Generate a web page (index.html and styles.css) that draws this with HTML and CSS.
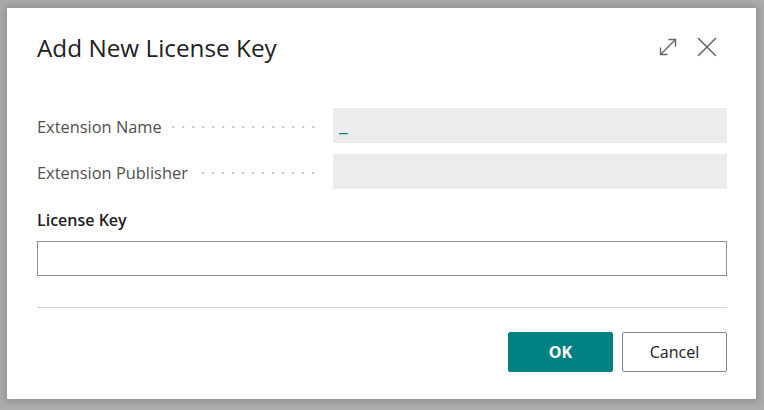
FILE: index.html
```html
<!DOCTYPE html>
<html lang="en">
<head>
<meta charset="utf-8">
<title>Add New License Key</title>
<link rel="stylesheet" href="styles.css">
</head>
<body>
<div class="backdrop">
  <div class="dialog">
    <div class="header">
      <h1 class="title">Add New License Key</h1>
      <div class="header-actions">
        <button class="icon-btn" aria-label="Expand">
          <svg width="20" height="20" viewBox="0 0 20 20" fill="none" stroke="#666" stroke-width="1.4" stroke-linecap="round" stroke-linejoin="round">
            <path d="M2.5 17.5 L17.5 2.5"/>
            <path d="M11 2.5 H17.5 V9"/>
            <path d="M2.5 11 V17.5 H9"/>
          </svg>
        </button>
        <button class="icon-btn" aria-label="Close">
          <svg width="20" height="20" viewBox="0 0 20 20" fill="none" stroke="#666" stroke-width="1.6" stroke-linecap="round">
            <path d="M1.5 1.5 L18.5 18.5"/>
            <path d="M18.5 1.5 L1.5 18.5"/>
          </svg>
        </button>
      </div>
    </div>

    <div class="fields">
      <div class="field-row">
        <div class="label-cell"><span class="label">Extension Name</span><span class="leader"></span></div>
        <div class="value-box"><span class="cursor">_</span></div>
      </div>
      <div class="field-row">
        <div class="label-cell"><span class="label">Extension Publisher</span><span class="leader"></span></div>
        <div class="value-box"></div>
      </div>
    </div>

    <div class="key-group">
      <div class="key-label">License Key</div>
      <div class="key-input"></div>
    </div>

    <div class="divider"></div>

    <div class="footer">
      <button class="btn btn-primary">OK</button>
      <button class="btn btn-secondary">Cancel</button>
    </div>
  </div>
</div>
</body>
</html>
```

FILE: styles.css
```css
* { box-sizing: border-box; }

html, body {
  margin: 0;
  padding: 0;
  width: 764px;
  height: 410px;
  overflow: hidden;
}

body {
  font-family: "Open Sans", "Noto Sans", "Liberation Sans", sans-serif;
  color: #212121;
}

.backdrop {
  width: 764px;
  height: 410px;
  background: #acacac;
  padding: 8px 8px 11px 7px;
}

.dialog {
  width: 749px;
  height: 391px;
  background: #ffffff;
  box-shadow: 0 0 8px 2px rgba(0, 0, 0, 0.18);
  padding: 0 29px 0 30px;
  display: flex;
  flex-direction: column;
}

.header {
  display: flex;
  align-items: center;
  justify-content: space-between;
  height: 78px;
}

.title {
  margin: 0;
  font-size: 24.3px;
  font-weight: 400;
  color: #212121;
}

.header-actions {
  display: flex;
  gap: 19px;
  margin-right: 10px;
  margin-top: -1px;
}

.icon-btn {
  background: none;
  border: none;
  padding: 0;
  width: 20px;
  height: 20px;
  display: flex;
}

.fields {
  display: flex;
  flex-direction: column;
  gap: 11px;
  margin-top: 22px;
}

.field-row {
  display: flex;
  align-items: stretch;
  height: 35px;
}

.label-cell {
  width: 296px;
  display: flex;
  align-items: center;
  padding-top: 2px;
  padding-right: 15px;
}

.label {
  font-size: 16.4px;
  color: #505050;
  white-space: nowrap;
}

.leader {
  flex: 1;
  height: 4px;
  margin-left: 9px;
  background-image: radial-gradient(circle, #c4c4c4 0.9px, transparent 1.3px);
  background-size: 10px 4px;
  background-repeat: repeat-x;
  background-position: right center;
}

.value-box {
  flex: 1;
  background: #ebeced;
  position: relative;
}

.cursor {
  position: absolute;
  left: 6px;
  top: 4px;
  font-size: 20px;
  line-height: 24px;
  color: #00807f;
}

.key-group {
  display: flex;
  flex-direction: column;
  margin-top: 19px;
}

.key-label {
  font-size: 16px;
  font-weight: 600;
  color: #212121;
  height: 23px;
  line-height: 23px;
  padding-top: 1px;
}

.key-input {
  margin-top: 10px;
  height: 35px;
  border: 1px solid #8a9095;
  background: #fff;
}

.divider {
  margin-top: 31px;
  height: 1px;
  background: #d2d2d2;
}

.footer {
  display: flex;
  justify-content: flex-end;
  gap: 9px;
  margin-top: 24px;
}

.btn {
  width: 105px;
  height: 40px;
  font-family: inherit;
  font-size: 16px;
  border-radius: 2px;
  cursor: pointer;
}

.btn-primary {
  background: #008080;
  border: 1px solid #008080;
  color: #ffffff;
  font-weight: 700;
}

.btn-secondary {
  background: #ffffff;
  border: 1px solid #8a8886;
  color: #212121;
}
```
